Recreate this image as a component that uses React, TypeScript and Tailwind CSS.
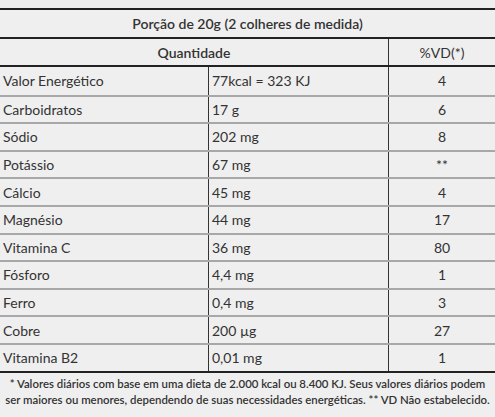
import React from "react";

const rows: [string, string, string][] = [
  ["Valor Energético", "77kcal = 323 KJ", "4"],
  ["Carboidratos", "17 g", "6"],
  ["Sódio", "202 mg", "8"],
  ["Potássio", "67 mg", "**"],
  ["Cálcio", "45 mg", "4"],
  ["Magnésio", "44 mg", "17"],
  ["Vitamina C", "36 mg", "80"],
  ["Fósforo", "4,4 mg", "1"],
  ["Ferro", "0,4 mg", "3"],
  ["Cobre", "200 µg", "27"],
  ["Vitamina B2", "0,01 mg", "1"],
];

export default function App() {
  return (
    <div className="w-[495px] h-[417px] bg-[#efefef] text-[#333] pt-[8px]" style={{ fontFamily: "Lato, 'Open Sans', sans-serif" }}>
      <div className="border-t-2 border-[#222] h-[29px] flex items-center justify-center text-[14px] font-semibold">
        Porção de 20g (2 colheres de medida)
      </div>
      <div className="border-t-2 border-[#222] h-[28px] flex text-[14px] font-semibold">
        <div className="w-[388px] flex items-center justify-center">Quantidade</div>
        <div className="flex-1 border-l border-[#333] flex items-center justify-center font-normal">%VD(*)</div>
      </div>
      <div className="border-t-2 border-[#222]">
        {rows.map((r, i) => (
          <div
            key={i}
            className={`flex h-[27.6px] text-[14px] ${i > 0 ? "border-t-2 border-[#a8a8a8]" : ""}`}
          >
            <div className="w-[208px] pl-[3px] flex items-center">{r[0]}</div>
            <div className="w-[180px] border-l border-[#333] pl-[3px] flex items-center">{r[1]}</div>
            <div className="flex-1 border-l border-[#333] flex items-center justify-center">{r[2]}</div>
          </div>
        ))}
      </div>
      <div className="border-t-2 border-[#222] pt-[3px] text-center text-[11.4px] font-semibold leading-[16px] text-[#333]">
        * Valores diários com base em uma dieta de 2.000 kcal ou 8.400 KJ. Seus valores diários podem
        <br />
        ser maiores ou menores, dependendo de suas necessidades energéticas. ** VD Não estabelecido.
      </div>
    </div>
  );
}
